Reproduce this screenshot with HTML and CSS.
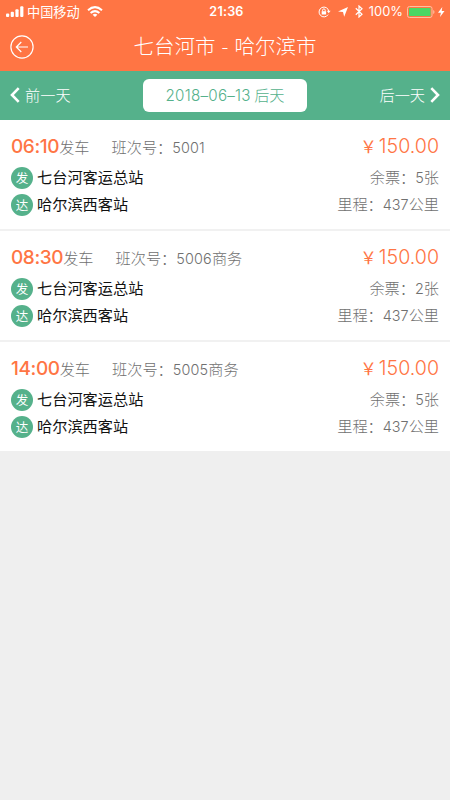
FILE: index.html
```html
<!DOCTYPE html>
<html lang="zh-CN">
<head>
<meta charset="utf-8">
<title>七台河市 - 哈尔滨市</title>
<link rel="stylesheet" href="styles.css">
</head>
<body>
<header class="top">
  <div class="status">
    <div class="status-left">
      <svg class="signal" width="18" height="12" viewBox="0 0 18 12" fill="#fff"><rect x="0" y="7.5" width="3.2" height="3.5" rx="1"/><rect x="4.7" y="5.7" width="3.2" height="5.3" rx="1"/><rect x="9.4" y="3.2" width="3.2" height="7.8" rx="1"/><rect x="14.2" y="0.3" width="3.2" height="10.7" rx="1"/></svg>
      <span class="carrier">中国移动</span>
      <svg class="wifi" width="16" height="12" viewBox="0 0 16 12" fill="none" stroke="#fff" stroke-width="2"><path d="M1 4.2Q8-2 15 4.2M3.6 7Q8 3.2 12.4 7"/><path d="M8 11 5.6 8.7Q8 7 10.4 8.7Z" fill="#fff" stroke="none"/></svg>
    </div>
    <span class="clock">21:36</span>
    <div class="status-right">
      <svg class="lock" width="13" height="12" viewBox="0 0 13 12" fill="none" stroke="#fff"><path d="M10.1 8.6A4.9 4.9 0 1 1 10.8 5.2"/><path d="M8.8 4.8H12.6L10.7 7.3Z" fill="#fff" stroke="none"/><rect x="3.7" y="5.2" width="4.4" height="3.3" fill="#fff" stroke="none"/><path d="M4.6 5.3V4.2a1.3 1.3 0 0 1 2.6 0V5.3"/></svg>
      <svg class="arrow" width="10" height="10" viewBox="0 0 10 10" fill="#fff"><path d="M10 0 6.2 9.8 5 5 0 4.5Z"/></svg>
      <svg class="bt" width="8" height="13" viewBox="0 0 8 13" fill="none" stroke="#fff" stroke-width="1.2"><path d="M.8 3.3 7 9.3 4 12V1L7 3.7.8 9.7"/></svg>
      <span class="percent">100%</span>
      <svg class="battery" width="28" height="12" viewBox="0 0 28 12"><rect x=".5" y=".5" width="24.5" height="11" rx="2" fill="none" stroke="#ffc0a0"/><rect x="2" y="2" width="21.5" height="8" rx=".6" fill="#4bd763"/><path d="M26.2 4v4q1.3-.5 1.3-2t-1.3-2" fill="#ffc0a0"/></svg>
      <svg class="bolt" width="7" height="10" viewBox="0 0 7 10" fill="#fff"><path d="M4.3 0 0 5.7H2.9L2 10 6.5 4H3.7Z"/></svg>
    </div>
  </div>
  <div class="nav">
    <svg class="back" width="24" height="24" viewBox="0 0 24 24" fill="none" stroke="#fff" stroke-width="1.2"><circle cx="12" cy="12" r="11.1"/><path d="M18 12H6.5M11.3 7 6.3 12 11.3 17"/></svg>
    <h1>七台河市 - 哈尔滨市</h1>
  </div>
</header>
<div class="days">
  <div class="day"><svg width="10" height="16" viewBox="0 0 10 16" fill="none" stroke="#fff" stroke-width="2.6"><path d="M8.7 1.2 2 8 8.7 14.8"/></svg><span>前一天</span></div>
  <div class="date"><span class="num">2018–06–13</span> 后天</div>
  <div class="day"><span>后一天</span><svg width="10" height="16" viewBox="0 0 10 16" fill="none" stroke="#fff" stroke-width="2.6"><path d="M1.3 1.2 8 8 1.3 14.8"/></svg></div>
</div>
<main>
  <section class="trip">
    <div class="row head"><div class="depart"><b>06:10</b><span>发车</span><span class="shift">班次号：<span class="num">5001</span></span></div><div class="price"><span class="yen">￥</span>150.00</div></div>
    <div class="row"><div class="stop"><i>发</i><span>七台河客运总站</span></div><div>余票：<span class="num">5</span>张</div></div>
    <div class="row"><div class="stop"><i>达</i><span>哈尔滨西客站</span></div><div>里程：<span class="num">437</span>公里</div></div>
  </section>
  <section class="trip">
    <div class="row head"><div class="depart"><b>08:30</b><span>发车</span><span class="shift">班次号：<span class="num">5006</span>商务</span></div><div class="price"><span class="yen">￥</span>150.00</div></div>
    <div class="row"><div class="stop"><i>发</i><span>七台河客运总站</span></div><div>余票：<span class="num">2</span>张</div></div>
    <div class="row"><div class="stop"><i>达</i><span>哈尔滨西客站</span></div><div>里程：<span class="num">437</span>公里</div></div>
  </section>
  <section class="trip">
    <div class="row head"><div class="depart"><b>14:00</b><span>发车</span><span class="shift">班次号：<span class="num">5005</span>商务</span></div><div class="price"><span class="yen">￥</span>150.00</div></div>
    <div class="row"><div class="stop"><i>发</i><span>七台河客运总站</span></div><div>余票：<span class="num">5</span>张</div></div>
    <div class="row"><div class="stop"><i>达</i><span>哈尔滨西客站</span></div><div>里程：<span class="num">437</span>公里</div></div>
  </section>
</main>
</body>
</html>
```

FILE: styles.css
```css
* { box-sizing: border-box; }
body {
  margin: 0;
  min-height: 800px;
  background: #efefef;
  color: #707070;
  font: 300 15.2px/22px "Noto Sans CJK SC", sans-serif;
  white-space: nowrap;
}
svg { display: block; flex: none; }
.top { height: 71px; background: #ff7544; color: #fff; }
.status {
  display: grid;
  grid-template-columns: 1fr auto 1fr;
  align-items: center;
  height: 22px;
  padding: 0 5px 0 6px;
}
.status-left, .status-right { display: flex; align-items: center; }
.status-right { justify-content: flex-end; }
.carrier { margin-left: 3px; font-size: 13.2px; font-weight: 400; }
.wifi { margin-left: 7px; }
.clock { padding-left: 2px; font: 600 12.6px/22px Inter, sans-serif; letter-spacing: .2px; }
.arrow { margin-left: 7px; }
.bt { margin-left: 7px; }
.percent { margin-left: 6px; padding-top: 1px; font: 400 12.9px/22px Inter, sans-serif; }
.battery { margin-left: 4px; }
.bolt { margin-left: 3px; }
.nav {
  display: grid;
  grid-template-columns: 24px 1fr 24px;
  align-items: center;
  height: 49px;
  padding: 0 10px;
}
h1 {
  margin: 0;
  padding-bottom: 3px;
  font-size: 20.5px;
  font-weight: 300;
  line-height: 30px;
  text-align: center;
  word-spacing: 1.5px;
}
.days {
  display: flex;
  align-items: center;
  justify-content: space-between;
  height: 48.5px;
  padding: 0 10px;
  background: #55b18b;
  color: #fff;
}
.day { display: flex; align-items: center; gap: 5px; }
.day span { padding-bottom: 3px; }
.date {
  width: 164px;
  height: 33px;
  border-radius: 6px;
  background: #fff;
  color: #55b18b;
  line-height: 31px;
  text-align: center;
}
.num { font-family: Inter, sans-serif; font-size: 14.4px; }
.date .num { font-size: 15.2px; letter-spacing: .25px; }
.shift .num { letter-spacing: .15px; }
.trip {
  height: 111px;
  padding: 13.5px 11px 0;
  background: #fff;
  border-bottom: 2px solid #f1f1f1;
}
.trip:last-child { height: 109.5px; border-bottom: 0; }
.row { display: flex; align-items: center; justify-content: space-between; height: 27px; line-height: 20px; }
.row > div:last-child { padding-bottom: 1px; }
.head { height: 31px; align-items: flex-start; line-height: 27px; }
.depart { display: flex; align-items: baseline; }
b { color: #ff7544; font: 500 19px/27px Inter, sans-serif; letter-spacing: -.4px; }
.shift { margin-left: 22px; }
.price { color: #ff7544; font: 300 19.6px/26px Inter, sans-serif; }
.yen { margin-right: 2px; font: 400 16.5px/26px "Noto Sans CJK SC", sans-serif; }
.stop { display: flex; align-items: center; color: #111; font-weight: 400; }
.stop span { padding-bottom: 3px; }
.stop i {
  width: 22px;
  height: 22px;
  margin-right: 4px;
  border-radius: 50%;
  background: #55b18b;
  color: #fff;
  font-size: 12.5px;
  font-style: normal;
  line-height: 21px;
  text-align: center;
}
```
